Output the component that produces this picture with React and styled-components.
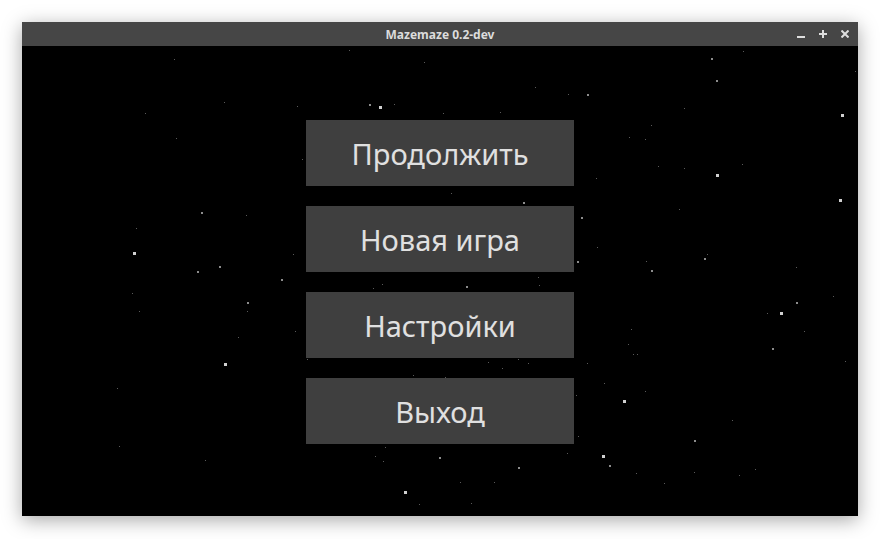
import styled, { createGlobalStyle } from 'styled-components';

const GlobalStyle = createGlobalStyle`
  html, body {
    margin: 0;
    padding: 0;
    background: #ffffff;
  }
`;

// [x, y, size] in page pixels
const STARS = [
  [174, 59, 1], [224, 102, 1], [297, 106, 1], [145, 113, 1], [176, 138, 1],
  [302, 159, 1], [201, 212, 2], [246, 215, 1], [136, 228, 1], [133, 252, 3],
  [293, 254, 1], [219, 266, 2], [197, 271, 2], [281, 279, 2],
  [132, 293, 1], [247, 302, 2], [139, 311, 1], [247, 311, 1], [295, 331, 1],
  [238, 337, 1], [224, 363, 3], [307, 359, 1], [117, 388, 1], [119, 446, 1],
  [205, 460, 1],
  [743, 51, 1], [711, 58, 2], [855, 71, 1], [716, 80, 2], [587, 94, 2],
  [684, 108, 1], [841, 114, 3], [651, 125, 1], [629, 137, 1], [645, 139, 1],
  [658, 166, 1], [684, 168, 1], [742, 164, 1], [716, 174, 3], [596, 178, 1],
  [839, 199, 3], [679, 209, 1], [581, 217, 2], [597, 247, 1], [707, 254, 1],
  [704, 258, 2], [577, 261, 2], [646, 261, 1], [651, 270, 2], [796, 267, 1],
  [833, 296, 1], [796, 302, 2], [780, 312, 3], [767, 313, 1], [631, 329, 1],
  [804, 331, 1], [628, 344, 1], [772, 348, 2], [633, 354, 1], [637, 354, 1],
  [587, 363, 1], [845, 361, 1], [604, 383, 1], [645, 391, 1], [576, 395, 1],
  [623, 400, 3], [732, 420, 1], [578, 436, 1], [694, 440, 2], [602, 455, 3],
  [609, 465, 2], [636, 473, 1], [694, 472, 1], [755, 469, 1], [739, 475, 1],
  [664, 483, 1],
  [349, 50, 1], [424, 62, 1], [535, 87, 1], [568, 94, 1], [369, 104, 2],
  [379, 106, 3], [394, 104, 1], [443, 113, 1], [500, 112, 1], [451, 193, 1],
  [523, 202, 2], [538, 277, 1], [382, 284, 1], [373, 288, 1], [466, 286, 2],
  [539, 285, 1], [488, 362, 1], [518, 359, 1], [528, 363, 1], [502, 368, 1],
  [413, 375, 1], [445, 377, 1], [385, 447, 1], [375, 456, 1], [383, 461, 1],
  [439, 457, 2], [518, 467, 2], [567, 453, 1], [460, 482, 1], [494, 482, 1],
  [404, 491, 3], [419, 504, 1], [471, 503, 1],
];

const STAR_COLORS = { 1: '#5a5a5a', 2: '#8c8c8c', 3: '#d0d0d0' };

const ITEMS = ['Продолжить', 'Новая игра', 'Настройки', 'Выход'];

const Desktop = () => (
  <Page>
    <GlobalStyle />
    <Window>
      <TitleBar>
        <Title>Mazemaze 0.2-dev</Title>
        <Controls>
          <ControlIcon viewBox='0 0 8 8'>
            <path d='M0 7h8' />
          </ControlIcon>
          <ControlIcon viewBox='0 0 8 8'>
            <path d='M4 0v8M0 4h8' />
          </ControlIcon>
          <ControlIcon viewBox='0 0 8 8'>
            <path d='M0.5 0.5l7 7M7.5 0.5l-7 7' />
          </ControlIcon>
        </Controls>
      </TitleBar>

      <Scene>
        <StarField viewBox='22 46 836 470' preserveAspectRatio='none'>
          {STARS.map(([x, y, s], i) => (
            <rect key={i} x={x} y={y} width={s} height={s} fill={STAR_COLORS[s]} />
          ))}
        </StarField>

        <Menu>
          {ITEMS.map((label) => (
            <MenuButton key={label}>{label}</MenuButton>
          ))}
        </Menu>
      </Scene>
    </Window>
  </Page>
);

const Page = styled.div`
  width: 881px;
  height: 539px;
  padding: 22px 23px 23px 22px;
  box-sizing: border-box;
  background: #ffffff;
`;

const Window = styled.div`
  width: 836px;
  height: 494px;
  display: flex;
  flex-direction: column;
  box-shadow: 0 4px 18px rgba(0, 0, 0, 0.35);
`;

const TitleBar = styled.div`
  position: relative;
  height: 24px;
  flex-shrink: 0;
  background: #464646;
  display: flex;
  align-items: center;
  justify-content: center;
`;

const Title = styled.span`
  font-family: 'Noto Sans', 'DejaVu Sans', sans-serif;
  font-weight: 700;
  font-size: 12px;
  color: #dcdcdc;
  letter-spacing: 0;
`;

const Controls = styled.div`
  position: absolute;
  right: 9px;
  top: 8px;
  display: flex;
  gap: 14px;
`;

const ControlIcon = styled.svg`
  width: 8px;
  height: 8px;
  fill: none;
  stroke: #dedede;
  stroke-width: 2;
  display: block;
`;

const Scene = styled.div`
  position: relative;
  flex: 1;
  background: #000000;
  display: flex;
  align-items: center;
  justify-content: center;
  overflow: hidden;
`;

const StarField = styled.svg`
  position: absolute;
  inset: 0;
  width: 100%;
  height: 100%;
  shape-rendering: crispEdges;
`;

const Menu = styled.nav`
  position: relative;
  display: flex;
  flex-direction: column;
  gap: 20px;
  margin-top: 2px;
`;

const MenuButton = styled.div`
  width: 268px;
  height: 66px;
  background: #3f3f3f;
  display: flex;
  align-items: center;
  justify-content: center;
  font-family: 'Noto Sans', 'Open Sans', sans-serif;
  font-size: 29px;
  color: #e0e0e0;
  cursor: pointer;
`;

export default Desktop;
